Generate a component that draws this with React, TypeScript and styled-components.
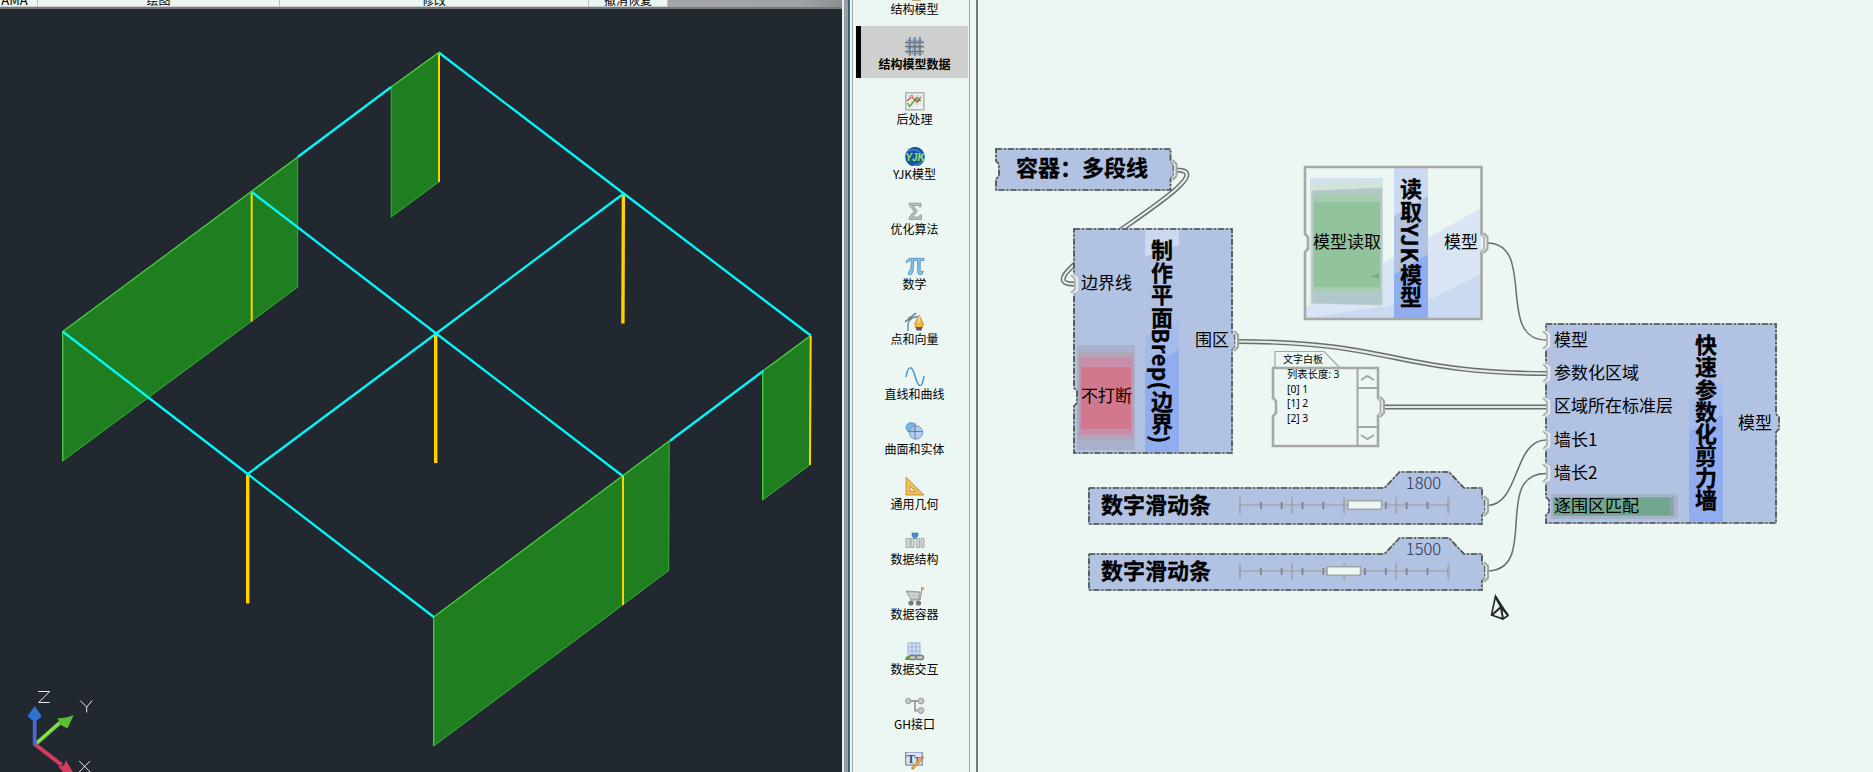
import React from "react";
import styled, { createGlobalStyle } from "styled-components";

const BG = "#ecf6f2";
const NODE = "#b2c2e3";
const CANVAS_X = 978;

const GlobalStyle = createGlobalStyle`
  body { margin: 0; background: ${BG}; overflow: hidden; }
  * { box-sizing: border-box; }
`;

const Page = styled.div`
  display: flex;
  width: 1873px;
  height: 772px;
  overflow: hidden;
  background: ${BG};
  color: #000;
  font-family: "Noto Sans CJK SC", "Noto Sans", sans-serif;
`;

/* ---------- CAD side ---------- */
const CadPane = styled.section`
  display: flex;
  flex-direction: column;
  width: 842px;
  background: #212830;
`;
const Ribbon = styled.header`
  display: flex;
  height: 9px;
  flex: none;
  overflow: hidden;
  background: linear-gradient(90deg, #a7a7a9 70%, #a2a3a5 95%, #8d8e90);
  border-bottom: 2px solid #77797b;
`;
const RibbonGroup = styled.div<{ $w: number; $shift?: number; $size?: number }>`
  width: ${(p) => p.$w}px;
  height: 7px;
  flex: none;
  display: flex;
  justify-content: center;
  align-items: flex-end;
  overflow: hidden;
  padding-right: ${(p) => p.$shift ?? 0}px;
  background: ${BG};
  border-right: 1px solid #b8bfbd;
  border-bottom: 1px solid #c9d0ce;
  font-size: ${(p) => p.$size ?? 12}px;
  line-height: 13px;
  white-space: nowrap;
`;
const Viewport = styled.div`
  flex: 1;
  svg { display: block; }
`;

const FrameEdge = styled.div`
  display: flex;
  width: 10px;
  flex: none;
`;
const Strip = styled.i<{ $w: number; $c: string }>`
  width: ${(p) => p.$w}px;
  background: ${(p) => p.$c};
`;

/* ---------- category sidebar ---------- */
const Sidebar = styled.nav`
  width: 118px;
  flex: none;
  height: 772px;
  overflow: hidden;
  display: flex;
  flex-direction: column;
  gap: 3px;
  padding-left: 3px;
  border-left: 1px solid #a0a6a4;
  border-right: 1px solid #a0a6a4;
`;
const Category = styled.div<{ $first?: boolean; $active?: boolean }>`
  width: 112px;
  height: 52px;
  flex: none;
  margin-top: ${(p) => (p.$first ? "-29px" : "0")};
  padding-top: 11px;
  display: flex;
  flex-direction: column;
  align-items: center;
  background: ${(p) => (p.$active ? "#cdd0cf" : "transparent")};
  border-left: 5px solid ${(p) => (p.$active ? "#000" : "transparent")};
  font-size: 12px;
  line-height: 16px;
  font-weight: ${(p) => (p.$active ? 700 : 400)};
  white-space: nowrap;
  svg { width: 20px; height: 19px; display: block; flex: none; }
`;
const Gutter = styled.div`
  width: 8px;
  flex: none;
  border-right: 2px solid #737776;
`;

/* ---------- node canvas ---------- */
const Canvas = styled.main`
  position: relative;
  flex: 1;
  overflow: hidden;
`;
const Overlay = styled.svg`
  position: absolute;
  left: 0;
  top: 0;
`;
const NodeFrame = styled.article<{ $x: number; $y: number; $w: number; $h: number }>`
  position: absolute;
  left: ${(p) => p.$x - CANVAS_X}px;
  top: ${(p) => p.$y}px;
  width: ${(p) => p.$w}px;
  height: ${(p) => p.$h}px;
  display: flex;
`;
const Shape = styled.svg`
  position: absolute;
  inset: 0;
  overflow: visible;
`;
const Col = styled.div<{ $w: number; $pad?: string; $align?: string; $lift?: number }>`
  position: relative;
  width: ${(p) => p.$w}px;
  margin-top: ${(p) => -(p.$lift ?? 0)}px;
  padding: ${(p) => p.$pad ?? "0"};
  display: flex;
  flex-direction: column;
  align-items: ${(p) => p.$align ?? "flex-start"};
`;
const PortLabel = styled.span<{ $h: number; $gap?: number }>`
  height: ${(p) => p.$h}px;
  line-height: ${(p) => p.$h}px;
  margin-top: ${(p) => p.$gap ?? 0}px;
  font-size: 17px;
  white-space: nowrap;
`;
const VerticalTitle = styled.h2<{ $w: number; $top: number; $ls?: number }>`
  position: relative;
  width: ${(p) => p.$w}px;
  margin: 0;
  padding-top: ${(p) => p.$top}px;
  writing-mode: vertical-rl;
  font-size: 22px;
  line-height: ${(p) => p.$w}px;
  font-weight: 700;
  letter-spacing: ${(p) => p.$ls ?? 0}px;
  white-space: nowrap;
  -webkit-text-stroke: 0.3px #000;
`;
const Title = styled.h2<{ $w?: number; $margin?: string }>`
  position: relative;
  margin: ${(p) => p.$margin ?? "0"};
  width: ${(p) => (p.$w ? p.$w + "px" : "auto")};
  font-size: 22px;
  line-height: 30px;
  font-weight: 700;
  white-space: nowrap;
  -webkit-text-stroke: 0.3px #000;
`;
const SliderValue = styled.span`
  position: relative;
  width: 80px;
  margin: -17px 18.5px 0 auto;
  text-align: center;
  font-family: "Noto Sans CJK SC", sans-serif;
  font-weight: 300;
  font-size: 16.5px;
  line-height: 22px;
  color: #26344f;
`;
const SliderRows = styled.div`
  display: flex;
  flex-direction: column;
  width: 100%;
`;
const SliderRow = styled.div`
  position: relative;
  display: flex;
  align-items: flex-start;
  height: 34px;
  margin-top: -5px;
  padding-left: 12px;
  svg { display: block; overflow: visible; margin-top: 7.5px; }
`;
const BoardTab = styled.div`
  position: relative;
  height: 17px;
  padding-left: 10px;
  font-size: 10px;
  line-height: 17px;
`;
const BoardLines = styled.div`
  position: relative;
  padding-left: 14px;
  font-family: "Noto Sans", "Noto Sans CJK SC", sans-serif;
  font-size: 10.3px;
  line-height: 14.6px;
`;

const range = (n: number) => Array.from({ length: n }, (_, i) => i);

function outline(w: number, h: number, left: number[], right: number[], tab?: number[]) {
  let d = "M0 0";
  if (tab) d += `L${tab[0]} 0L${tab[1]} -16L${tab[2]} -16L${tab[3]} 0`;
  d += `L${w} 0`;
  right.forEach((y) => {
    d += `L${w} ${y - 9}L${w + 3} ${y - 6}L${w + 3} ${y + 6}L${w} ${y + 9}`;
  });
  d += `L${w} ${h}L0 ${h}`;
  [...left].reverse().forEach((y) => {
    d += `L0 ${y + 9}L3 ${y + 6}L3 ${y - 6}L0 ${y - 9}`;
  });
  return d + "Z";
}

type ShapeProps = {
  w: number; h: number; left?: number[]; right?: number[];
  inPorts?: number[]; outPorts?: number[]; tab?: number[];
  plain?: boolean; children?: React.ReactNode;
};

function NodeShape({ w, h, left = [], right = [], inPorts = [], outPorts = [], tab, plain, children }: ShapeProps) {
  const d = outline(w, h, left, right, tab);
  return (
    <Shape width={w} height={h}>
      <path d={d} fill={plain ? BG : NODE} />
      {children}
      {plain ? (
        <path d={d} fill="none" stroke="#a6a8a7" strokeWidth="2.6" />
      ) : (
        <>
          <path d={d} fill="none" stroke="#a3adb9" strokeWidth="1.6" />
          <path d={d} fill="none" stroke="#4a5350" strokeWidth="1.7" strokeDasharray="6 2 2 2" />
        </>
      )}
      {outPorts.map((y) => (
        <g key={y} fill="none">
          <path d={`M${w + 1} ${y - 9}l3 3v12l-3 3`} stroke="#e6ebe9" strokeWidth="1.5" />
          <path d={`M${w + 2} ${y - 10}l4 4v12l-4 4`} stroke="#a3a6a5" strokeWidth="2" />
        </g>
      ))}
      {inPorts.map((y) => (
        <g key={y} fill="none">
          <path d={`M-1 ${y - 9}l4 3v12l-4 3`} stroke="#e6ebe9" strokeWidth="2.5" />
          <path d={`M-3 ${y - 9}l4 4v10l-4 4`} stroke="#a3a6a5" strokeWidth="1.6" />
        </g>
      ))}
    </Shape>
  );
}

function Track({ thumb }: { thumb: number }) {
  return (
    <svg width="212" height="20">
      <path d="M1 10H209" stroke="#a3a6ad" strokeWidth="1.6" />
      {range(11).map((i) => (
        <path key={i} d={`M${1 + i * 20.83} 7v7`} stroke="#7c838d" strokeWidth="1.8" />
      ))}
      {range(5).map((i) => (
        <path key={i} d={`M${1 + i * 52.08} 2v17`} stroke="#a3a6ad" strokeWidth="1.8" />
      ))}
      <rect x={thumb} y="5.7" width="33.5" height="8.6" fill={BG} stroke="#a3a6a5" strokeWidth="1.6" />
    </svg>
  );
}

function SliderNode({ y, value, thumb }: { y: number; value: string; thumb: number }) {
  return (
    <NodeFrame $x={1089} $y={y} $w={393} $h={36}>
      <NodeShape w={393} h={36} right={[18]} outPorts={[18]} tab={[295.5, 310.5, 360, 375]} />
      <SliderRows>
        <SliderValue>{value}</SliderValue>
        <SliderRow>
          <Title $w={138}>数字滑动条</Title>
          <Track thumb={thumb} />
        </SliderRow>
      </SliderRows>
    </NodeFrame>
  );
}

function Wire({ d, double }: { d: string; double?: boolean }) {
  return double ? (
    <>
      <path d={d} stroke="#696d6c" strokeWidth="5" />
      <path d={d} stroke="#e3eae7" strokeWidth="2.2" />
    </>
  ) : (
    <path d={d} stroke="#696d6c" strokeWidth="1.5" />
  );
}

function Model() {
  return (
    <svg width="842" height="763" viewBox="0.3 9 842 763">
      <g fill="#1f7e20" stroke="#37b339" strokeWidth="1">
        <path d="M439 52.5V182L391.5 217V87Z" />
        <path d="M63 331.500L298 157V287L63 461Z" />
        <path d="M434 617L669.5 441L669 570.5L434 746Z" />
        <path d="M763 371L811 335.5L810 465L763 500Z" />
      </g>
      <path d="M439 52.5L391.5 87M63 461V331.500L298 157M434 746V617L669.5 441M763 500V371L811 335.5" fill="none" stroke="#4cd043" strokeWidth="1.1" />
      <g stroke="#ffd200" strokeWidth="2">
        <path d="M439.3 54V182M252 193V321.5M623.3 476V605M811 336L810.3 465" />
        <path d="M623.7 195L623.2 323.5M436 335V463M248 475V603.5" strokeWidth="3.4" />
      </g>
      <g stroke="#00f8fa" strokeWidth="2.3" fill="none">
        <path d="M439 52.5L624 193.5L811 335.5M252 192L436.5 333.5L623 476M63 331.500L248 474L434 617" />
        <path d="M391.5 87L298 157M624 193.5L436.5 333.5L248 474M763.5 371L670 441" />
      </g>
      <g>
        <path d="M36 744L60 723" stroke="#6bd13a" strokeWidth="4" />
        <path d="M37 743L60 722" stroke="#96e45c" strokeWidth="1.4" />
        <path d="M58 718Q66 719 74 715L68 728Q60 727 58 718Z" fill="#5cbf31" />
        <path d="M35 744L62 765" stroke="#d83a64" strokeWidth="4" />
        <path d="M58 766Q65 768 66 760L75 775H66Z" fill="#d43b5e" />
        <path d="M35 745V718" stroke="#4a69cf" strokeWidth="3.8" />
        <path d="M35 706L42 716Q35 725 28 716Z" fill="#2f74cf" />
      </g>
      <path d="M38.500 691.500H50L39 702.500H50M80.500 700.500L87 707L92.500 700.500M87 707V712.500M79.500 761L90.500 772M90.500 761L79.500 772" stroke="#e6eaeb" fill="none" />
    </svg>
  );
}

const gray = "#9a9d9c";
const icons: Record<string, React.ReactNode> = {
  model: <path d="M7 17h9v2H7z" fill="#b8a47b" />,
  grid: (
    <g strokeWidth="1.6" fill="none">
      <path d="M2 3.500L18 4M2 11L19 10M2 16L18 17M3 2L3 17M8 1V18M13 2V18" stroke="#6da0de" strokeWidth="1" />
      <path d="M0 5.500H19M0 9.500H19M0 14.500H19M5 0V19M10 0V19M15 0V19" stroke="#70747a" strokeWidth="1.500" />
    </g>
  ),
  post: (
    <>
      <rect x=".8" y=".8" width="18" height="17" fill="#f1f2f2" stroke="#a9adac" strokeWidth="1.4" />
      <path d="M3 4h14M3 8h14M3 12h14M7 2v14M12 2v14" stroke="#d5d9d8" />
      <path d="M2 9L6.500 4.500L12 10L16 5" fill="none" stroke="#d34a35" strokeWidth="1.2" />
      <path d="M2.500 11L4.500 14.500L11 6.500L16 9" fill="none" stroke="#4fa835" strokeWidth="1.3" />
      <circle cx="12.5" cy="7.500" r="2.200" fill="none" stroke="#d34a35" />
      <circle cx="6.500" cy="4.500" r="1.300" fill="#f1f2f2" stroke="#d34a35" strokeWidth=".8" />
    </>
  ),
  yjk: (
    <>
      <circle cx="10" cy="9.7" r="9.8" fill="#1557a4" />
      <path d="M3 4Q12 0 17 8T8 19" fill="none" stroke="#5e9bd4" />
      <text x="10" y="13.500" textAnchor="middle" fontSize="11" fontStyle="italic" fontWeight="700" fontFamily="Liberation Sans" fill="#a2e463" textLength="19" lengthAdjust="spacingAndGlyphs">YJK</text>
    </>
  ),
  sum: <path d="M4 1.2H16V5H14.5L14 3.5H8L12.5 9L7.5 15H14L15 13H16.5V17.5H4V15.5L9 9.3L4 3Z" fill="#b8bbc0" stroke="#92959a" strokeWidth=".8" />,
  pi: <path d="M1 6Q2 1.300 6 1.300H19V3.600H15.200V13Q15.200 15.500 18.500 14.300Q17.500 17.800 15 17.800Q12.700 17.600 12.700 14V3.600H8.500V9Q8.300 18 5 18Q2.500 17.500 3.500 15Q6.300 13 6.500 3.600Q3 3.600 1 6Z" fill="#8cc0e6" stroke="#4c8abc" strokeWidth=".8" />,
  pen: (
    <>
      <path d="M3 19V12Q4 6 10 5H14" fill="none" stroke="#5288ad" strokeWidth="1.3" />
      <path d="M0 10L11 1" stroke="#6d7274" strokeWidth="1.5" />
      <circle cx="5" cy="6.5" r="2" fill="#7d8385" />
      <path d="M14 3L18.5 12L17 16H11L9.5 12Z" fill="#f2b63a" stroke="#b88328" strokeWidth=".7" />
      <path d="M14 4V11" stroke="#fff1bd" /><path d="M10.5 15h7l-1 3.5h-5Z" fill="#5a5c5e" />
    </>
  ),
  curve: <path d="M1 10C3 -2 7 -2 10 9S17 23 19 9" fill="none" stroke="#4795c9" strokeWidth="1.5" />,
  solid: (
    <>
      <circle cx="6" cy="5.5" r="5" fill="#79b5e0" stroke="#5b90c4" strokeWidth=".7" />
      <circle cx="11" cy="10.5" r="6.700" fill="#a9c6ec" fillOpacity=".85" stroke="#6b92ca" strokeWidth=".9" />
      <path d="M3 9.500H18M10 1V17" stroke="#5679a8" strokeWidth=".9" />
    </>
  ),
  triangle: <path d="M1 0V18H19ZM5 9V14.500H10.500Z" fill="#f0bf55" fillRule="evenodd" stroke="#c58b31" strokeWidth=".9" />,
  structure: (
    <>
      <path d="M1 6.500h4v9h-4ZM6 6.500h3v9h-3ZM11.500 6.500h3v9h-3ZM16 6.500h3v9h-3Z" fill="#d4d6d8" stroke={gray} strokeWidth=".8" />
      <path d="M7 1h6v3l-3 3-3-3Z" fill="#4b8fd8" stroke="#2b6cb5" strokeWidth=".6" />
    </>
  ),
  cart: (
    <>
      <path d="M1 4L15 5L14 13H6Z" fill="#b8babc" stroke="#86898b" strokeWidth=".8" />
      <path d="M2 7H15M4 10H14M7 5V12M11 5V12" stroke="#e5e7e8" strokeWidth=".7" />
      <path d="M15 13L17 1.500H19" fill="none" stroke="#85888a" /><path d="M16 .500h3v2h-3z" fill="#e0893b" />
      <circle cx="6" cy="16" r="2.600" fill="#77797b" /><circle cx="13.500" cy="16" r="2.600" fill="#77797b" />
    </>
  ),
  exchange: (
    <>
      <path d="M3 1H15V13H3Z" fill="#d4e0f3" stroke="#9bb2d8" />
      <path d="M3 5H15M3 9H15M7 0V14M11 0V14" stroke="#9bb2d8" />
      <rect x="4" y="13.500" width="7" height="4" rx="2" fill="#c9cccb" stroke="#777b7c" strokeWidth="1.300" />
      <rect x="11" y="13.500" width="7.500" height="4" rx="2" fill="#c9cccb" stroke="#777b7c" strokeWidth="1.300" />
      <path d="M0 18Q1 13 5 14L4 18Z" fill="#5fa12e" />
    </>
  ),
  gh: (
    <>
      <path d="M4 4H16M10 4V13.500H15" fill="none" stroke={gray} strokeWidth="1.800" />
      <g fill="#c6c8c9" stroke={gray}><circle cx="3.300" cy="4" r="2.700" /><circle cx="16" cy="4" r="2.900" /><circle cx="16" cy="13.500" r="2.900" /></g>
    </>
  ),
  text: (
    <>
      <rect x=".7" y="0" width="16.500" height="13" fill="#dce8f7" stroke="#7186a6" strokeWidth="1.200" />
      <text x="2" y="11" fontSize="12" fontWeight="700" fontFamily="Liberation Serif" fill="#2b4e80">T</text>
      <text x="9.500" y="10.500" fontSize="8" fontWeight="700" fontFamily="Liberation Serif" fill="#2b4e80">T</text>
      <path d="M7 17L17 6" stroke="#d98d2f" strokeWidth="3" /><path d="M8 16L17 6" stroke="#ffc862" /><path d="M16 7L18.500 4.500" stroke="#d7786e" strokeWidth="2.600" />
    </>
  ),
};

const categories: [string, string][] = [
  ["model", "结构模型"], ["grid", "结构模型数据"], ["post", "后处理"], ["yjk", "YJK模型"],
  ["sum", "优化算法"], ["pi", "数学"], ["pen", "点和向量"], ["curve", "直线和曲线"],
  ["solid", "曲面和实体"], ["triangle", "通用几何"], ["structure", "数据结构"],
  ["cart", "数据容器"], ["exchange", "数据交互"], ["gh", "GH接口"], ["text", ""],
];

export default function App() {
  return (
    <Page>
      <GlobalStyle />
      <CadPane>
        <Ribbon>
          <RibbonGroup $w={38} $shift={8} $size={13}>AMA</RibbonGroup>
          <RibbonGroup $w={242}>绘图</RibbonGroup>
          <RibbonGroup $w={309}>修改</RibbonGroup>
          <RibbonGroup $w={79}>撤消恢复</RibbonGroup>
        </Ribbon>
        <Viewport><Model /></Viewport>
      </CadPane>
      <FrameEdge>
        <Strip $w={2} $c="#e8eeeb" />
        <Strip $w={4} $c="#9b9da3" />
        <Strip $w={1} $c="#2d6374" />
        <Strip $w={1} $c="#476e7b" />
        <Strip $w={2} $c="#e8f2ee" />
      </FrameEdge>
      <Sidebar>
        {categories.map(([icon, label], i) => (
          <Category key={icon} $first={i === 0} $active={i === 1}>
            <svg viewBox="0 0 20 19">{icons[icon]}</svg>
            {label}
          </Category>
        ))}
      </Sidebar>
      <Gutter />
      <Canvas>
        <Overlay width="895" height="772" viewBox={`${CANVAS_X} 0 895 772`} fill="none">
          <Wire double d="M1176 170C1238 170 1012 284 1074 284" />
          <Wire double d="M1237 341.500C1390 341.500 1400 373.500 1547 373.500" />
          <Wire double d="M1383 407H1547" />
          <Wire d="M1487 243C1537 243 1495 340 1546 340" />
          <Wire d="M1487 505.500C1520 505.500 1513 440 1546 440" />
          <Wire d="M1487 571C1540 571 1492 473.500 1546 473.500" />
        </Overlay>

        <NodeFrame $x={996} $y={149.3} $w={174.5} $h={41}>
          <NodeShape w={174.5} h={41} left={[21]} right={[21]} outPorts={[21]} />
          <Title $margin="2px 0 0 20px">容器：多段线</Title>
        </NodeFrame>

        <NodeFrame $x={1074} $y={229.3} $w={158} $h={224}>
          <NodeShape w={158} h={224} left={[55, 168]} right={[112]} inPorts={[55]} outPorts={[112]}>
            <rect x="3" y="116" width="58" height="105" fill="#a9b0cb" />
            <rect x="5" y="124" width="54" height="86" fill="#b6a3bd" stroke="#a6abb1" strokeWidth="1.500" />
            <rect x="5.500" y="128" width="53" height="78" fill="#c88fab" />
            <rect x="7" y="138" width="50" height="62" fill="#d1788f" />
            <path d="M71 0h34v16L71 28z" fill="#cbd8ef" />
            <path d="M71 107L105 92V122L71 142Z" fill="#a4bbeb" />
            <path d="M71 142L105 120V224H71Z" fill="#90adef" />
          </NodeShape>
          <Col $w={71} $pad="0 0 0 7px" $lift={1}>
            <PortLabel $h={26} $gap={41}>边界线</PortLabel>
            <PortLabel $h={26} $gap={87}>不打断</PortLabel>
          </Col>
          <VerticalTitle $w={34} $top={10} $ls={0.4}>制作平面Brep(边界)</VerticalTitle>
          <Col $w={53} $pad="0 3px 0 0" $align="flex-end" $lift={1}>
            <PortLabel $h={26} $gap={98}>围区</PortLabel>
          </Col>
        </NodeFrame>

        <NodeFrame $x={1305} $y={167} $w={176.5} $h={152}>
          <NodeShape w={176.5} h={152} left={[76]} right={[76]} outPorts={[76]} plain>
            <path d="M1 140L176 41V151H1Z" fill="#d9e5f4" />
            <path d="M1 151L60 142L122 134L176 107V151Z" fill="#ccdaf1" />
            <path d="M5 13L78 11V137H5Z" fill="#d0e4d9" />
            <path d="M5 11h73v3L5 16Z" fill="#d2e0f1" />
            <path d="M7 24L77 21V138L7 136Z" fill="#b0c7cc" stroke="#c4cbc9" />
            <path d="M8 27H75V124H8Z" fill="#a5cbb0" />
            <path d="M9 35H75V120H9Z" fill="#91c39c" />
            <path d="M65 110L74 106V111Z" fill="#82a88c" />
            <path d="M89 0h34v151h-34z" fill="#ccdaf1" />
            <path d="M89 49L123 29V90L89 107Z" fill="#b2c2e3" />
            <path d="M89 107L123 87V151H89Z" fill="#90adef" />
          </NodeShape>
          <Col $w={89} $pad="0 0 0 8px">
            <PortLabel $h={26} $gap={60.5}>模型读取</PortLabel>
          </Col>
          <VerticalTitle $w={34} $top={10.5} $ls={0.7}>读取YJK模型</VerticalTitle>
          <Col $w={53} $pad="0 3px 0 0" $align="flex-end">
            <PortLabel $h={26} $gap={60.5}>模型</PortLabel>
          </Col>
        </NodeFrame>

        <NodeFrame $x={1273} $y={368} $w={105} $h={78}>
          <NodeShape w={105} h={78} left={[39]} right={[39]} outPorts={[39]} plain>
            <path d="M2 0V-16.500H51L67 0" fill={BG} stroke="#a3a6a5" strokeWidth="1.200" />
            <path d="M84.500 0V78M84.500 20H105M84.500 59H105" stroke="#a3a6a5" strokeWidth="2" />
            <path d="M88 12l6.500-4 6.500 4M88 67l6.500 4 6.500-4" fill="none" stroke="#a3a6a5" strokeWidth="2" />
          </NodeShape>
          <Col $w={84} $lift={18}>
            <BoardTab>文字白板</BoardTab>
            <BoardLines>
              列表长度: 3
              {range(3).map((i) => <div key={i}>[{i}] {i + 1}</div>)}
            </BoardLines>
          </Col>
        </NodeFrame>

        <NodeFrame $x={1546} $y={324} $w={230} $h={199}>
          <NodeShape w={230} h={199} left={[16, 49, 83, 116, 149, 182]} right={[99]} inPorts={[16, 49, 83, 116, 149]}>
            <rect x="5" y="170" width="127" height="25" fill="#a5b4ca" />
            <rect x="7" y="173" width="121" height="19" fill="#8da5a9" />
            <rect x="8" y="174" width="116" height="17" fill="#73a68e" />
            <path d="M143 76L177 58V90L143 108Z" fill="#a4bbeb" />
            <path d="M143 108L177 90V199H143Z" fill="#90adef" />
          </NodeShape>
          <Col $w={143} $pad="0 0 0 8px" $lift={2}>
            {["模型", "参数化区域", "区域所在标准层", "墙长1", "墙长2", "逐围区匹配"].map((t) => (
              <PortLabel key={t} $h={33.2}>{t}</PortLabel>
            ))}
          </Col>
          <VerticalTitle $w={34} $top={10} $ls={0.1}>快速参数化剪力墙</VerticalTitle>
          <Col $w={53} $pad="0 4px 0 0" $align="flex-end">
            <PortLabel $h={26} $gap={85}>模型</PortLabel>
          </Col>
        </NodeFrame>

        <SliderNode y={487.5} value="1800" thumb={109} />
        <SliderNode y={553.5} value="1500" thumb={88} />

        <Overlay width="895" height="772" viewBox={`${CANVAS_X} 0 895 772`} fill="none">
          <path d="M1495.500 596L1491.500 615L1503 619L1508 615.500Z" fill="#eef3f1" stroke="#22282a" strokeWidth="1.600" />
          <path d="M1495.500 597L1501 607L1503 619M1492 615L1501 607L1508 615" stroke="#22282a" strokeWidth="2" />
        </Overlay>
      </Canvas>
    </Page>
  );
}
